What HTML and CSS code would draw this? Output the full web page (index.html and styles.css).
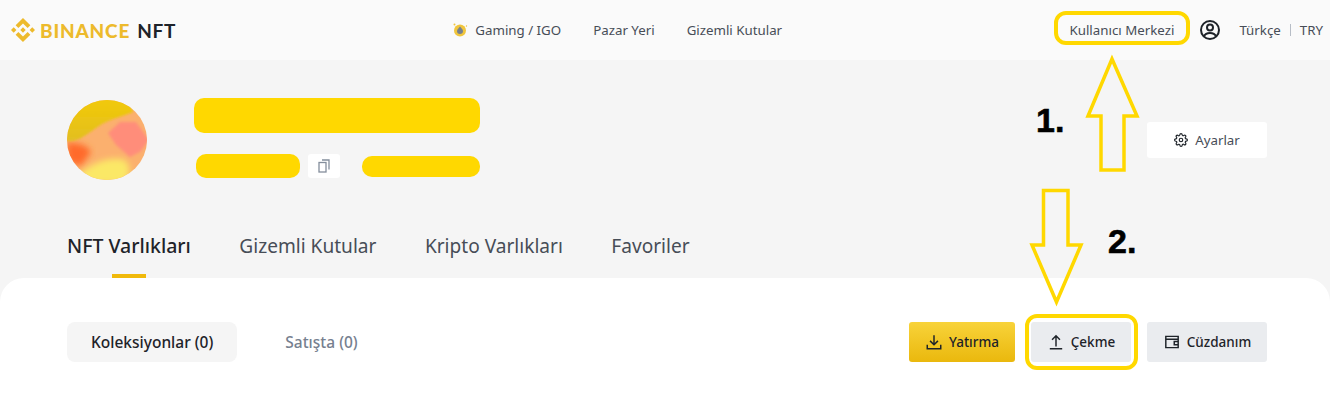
FILE: index.html
```html
<!DOCTYPE html>
<html>
<head>
  <title>Binance NFT</title>
  <link rel="stylesheet" href="styles.css">
</head>
<body>
  <div class="page">
    <header class="topbar">
      <a class="logo">
        <svg class="logo-mark" viewBox="0 0 24 24"><path d="M16.624 13.9202l2.7175 2.7154-7.353 7.353-7.353-7.352 2.7175-2.7164 4.6355 4.6595 4.6356-4.6595zm4.6366-4.6366L24 12l-2.7154 2.7164L18.5682 12l2.6924-2.7164zm-9.272.001l2.7163 2.6914-2.7164 2.7174v-.001L9.2721 12l2.7164-2.7154zm-9.2722-.001L5.4088 12l-2.6914 2.6924L0 12l2.7164-2.7164zM11.9885.0115l7.353 7.329-2.7174 2.7154-4.6356-4.6356-4.6355 4.6595-2.7174-2.7154 7.353-7.353z"/></svg>
        <span class="logo-gold">BINANCE</span>
        <span class="logo-dark">NFT</span>
      </a>
      <nav class="nav">
        <a class="nav-item">
          <svg class="igo-icon" viewBox="0 0 16 16">
            <circle cx="8" cy="8.500" r="6" fill="#f0c53c"/>
            <path d="M8 4.500c1 1.600 3 2.600 3 4.600a3 3 0 0 1-6 0c0-2 2-3 3-4.600z" fill="#76808f"/>
            <circle cx="2.500" cy="2.500" r="1" fill="#f0c53c"/>
            <circle cx="14.500" cy="4" r=".7" fill="#f0c53c"/>
          </svg>
          Gaming / IGO
        </a>
        <a class="nav-item">Pazar Yeri</a>
        <a class="nav-item">Gizemli Kutular</a>
      </nav>
      <div class="top-right">
        <a class="nav-item">Kullanıcı Merkezi</a>
        <svg class="user-icon" viewBox="0 0 24 24" fill="none" stroke="#1e2329" stroke-width="2">
          <circle cx="12" cy="12" r="9"/>
          <circle cx="12" cy="9.500" r="3"/>
          <path d="M6 18.500c1-2.500 3-3.500 6-3.500s5 1 6 3.500"/>
        </svg>
        <div class="lang">
          <span>Türkçe</span>
          <i class="lang-sep"></i>
          <span>TRY</span>
        </div>
      </div>
    </header>

    <section class="hero">
      <div class="profile">
        <svg class="avatar" viewBox="0 0 80 80">
          <defs>
            <filter id="soft" x="-20%" y="-20%" width="140%" height="140%"><feGaussianBlur stdDeviation="3"/></filter>
            <filter id="crisp" x="-20%" y="-20%" width="140%" height="140%"><feGaussianBlur stdDeviation="1.500"/></filter>
            <filter id="softer" x="-20%" y="-20%" width="140%" height="140%"><feGaussianBlur stdDeviation="1"/></filter>
            <linearGradient id="cap" x1="0" y1="0" x2="0" y2="1">
              <stop offset="0" stop-color="#f3ca04"/>
              <stop offset="1" stop-color="#e2bf22"/>
            </linearGradient>
          </defs>
          <rect width="80" height="80" fill="#fbb06e"/>
          <path d="M0 42C8 44 18 42 24 52L14 66 0 62z" fill="#ff6a2a" filter="url(#soft)"/>
          <path d="M12 74C26 62 44 56 58 60 64 66 64 74 58 84H12z" fill="#fbe866" filter="url(#soft)"/>
          <path d="M41 33L53 22H69L82 40 73 52 63 57 49 45z" fill="#ff8d7a" filter="url(#crisp)"/>
          <path d="M-2 40C3 42 8 42 19 35 28 29 34 24 39 22 48 18 56 16 66 12L60-4H-2z" fill="url(#cap)" filter="url(#softer)"/>
        </svg>
        <div class="profile-info">
          <div class="mask mask-name"></div>
          <div class="profile-sub">
            <div class="mask mask-id"></div>
            <div class="copy-btn">
              <svg viewBox="0 0 12 14" fill="none" stroke="#848e9c" stroke-width="1.300">
                <rect x="1" y="3.500" width="7" height="9.500"/>
                <path d="M4 1h7v9.500"/>
              </svg>
            </div>
            <div class="mask mask-date"></div>
          </div>
        </div>
        <a class="settings-btn">
          <svg viewBox="0 0 24 24" fill="none" stroke="#1e2329" stroke-width="2">
            <circle cx="12" cy="12" r="3"/>
            <path d="M19.400 15a1.650 1.650 0 0 0 .33 1.820l.06.06a2 2 0 0 1 0 2.830 2 2 0 0 1-2.830 0l-.06-.06a1.650 1.650 0 0 0-1.820-.33 1.650 1.650 0 0 0-1 1.510V21a2 2 0 0 1-2 2 2 2 0 0 1-2-2v-.09A1.650 1.650 0 0 0 9 19.400a1.650 1.650 0 0 0-1.820.33l-.06.06a2 2 0 0 1-2.830 0 2 2 0 0 1 0-2.830l.06-.06a1.650 1.650 0 0 0 .33-1.820 1.650 1.650 0 0 0-1.510-1H3a2 2 0 0 1-2-2 2 2 0 0 1 2-2h.09A1.650 1.650 0 0 0 4.600 9a1.650 1.650 0 0 0-.33-1.820l-.06-.06a2 2 0 0 1 0-2.830 2 2 0 0 1 2.830 0l.06.06a1.650 1.650 0 0 0 1.820.33H9a1.650 1.650 0 0 0 1-1.510V3a2 2 0 0 1 2-2 2 2 0 0 1 2 2v.09a1.650 1.650 0 0 0 1 1.510 1.650 1.650 0 0 0 1.820-.33l.06-.06a2 2 0 0 1 2.830 0 2 2 0 0 1 0 2.830l-.06.06a1.650 1.650 0 0 0-.33 1.820V9a1.650 1.650 0 0 0 1.510 1H21a2 2 0 0 1 2 2 2 2 0 0 1-2 2h-.09a1.650 1.650 0 0 0-1.510 1z"/>
          </svg>
          Ayarlar
        </a>
      </div>
      <div class="tabs">
        <a class="tab active">NFT Varlıkları</a>
        <a class="tab">Gizemli Kutular</a>
        <a class="tab">Kripto Varlıkları</a>
        <a class="tab">Favoriler</a>
      </div>
    </section>

    <section class="panel">
      <div class="filters">
        <a class="filter active">Koleksiyonlar (0)</a>
        <a class="filter">Satışta (0)</a>
      </div>
      <div class="actions">
        <a class="btn btn-gold">
          <svg viewBox="0 0 16 16" fill="none" stroke="#1e2329" stroke-width="1.300"><path d="M8 2v8M4.500 7L8 10.500 11.500 7M2 10.500V14h12v-3.500"/></svg>
          Yatırma
        </a>
        <a class="btn btn-grey btn-cekme">
          <svg viewBox="0 0 16 16" fill="none" stroke="#1e2329" stroke-width="1.300"><path d="M8 12V2.500M4.500 6L8 2.500 11.500 6M2.500 14h11"/></svg>
          Çekme
        </a>
        <a class="btn btn-grey btn-wallet">
          <svg viewBox="0 0 16 16" fill="none" stroke="#1e2329" stroke-width="1.300"><path d="M2.500 3h11v10h-11zM2.500 5.500h11M13.500 7.500h-3.500v3h3.500"/></svg>
          Cüzdanım
        </a>
      </div>
    </section>

    <div class="mark-box mark-top"></div>
    <div class="mark-box mark-cekme"></div>
    <svg class="arrows" viewBox="0 0 1330 412" fill="none" stroke="#ffd800" stroke-width="3.500">
      <path d="M1112 59L1137 116H1124V170H1101V116H1088z"/>
      <path d="M1043.500 190.500H1068V245H1081L1056.500 302 1032 245H1043.500z"/>
    </svg>
    <span class="step step-1">1.</span>
    <span class="step step-2">2.</span>
  </div>
</body>
</html>
```

FILE: styles.css
```css
* {
  box-sizing: border-box;
}
body {
  margin: 0;
  font-family: "Noto Sans", Arial, sans-serif;
  color: #1e2329;
  background: #f5f5f5;
}
svg {
  display: block;
  flex: none;
}
.page {
  position: relative;
  width: 1330px;
  height: 412px;
  overflow: hidden;
  display: flex;
  flex-direction: column;
}

/* top bar */
.topbar {
  height: 60px;
  flex: none;
  background: #fafafa;
  display: flex;
  align-items: center;
  padding: 0 7px 0 11px;
}
.logo {
  display: flex;
  align-items: center;
  font-family: "Lato", Arial, sans-serif;
  font-weight: 900;
  font-size: 19px;
  letter-spacing: 0.8px;
}
.logo-mark {
  width: 24px;
  height: 24px;
  fill: #edba2c;
  margin-right: 5px;
}
.logo-gold {
  color: #edba2c;
  margin-right: 7px;
}
.logo-dark {
  font-weight: 700;
}
.nav {
  display: flex;
  align-items: center;
  gap: 32px;
  margin-left: 276px;
}
.nav-item {
  display: flex;
  align-items: center;
  font-size: 13.3px;
  color: #474d57;
}
.igo-icon {
  width: 16px;
  height: 16px;
  margin-right: 7px;
}
.top-right {
  display: flex;
  align-items: center;
  margin-left: auto;
}
.user-icon {
  width: 24px;
  height: 24px;
  margin: 0 17px 0 24px;
}
.lang {
  display: flex;
  align-items: center;
  font-size: 13.3px;
  color: #474d57;
}
.lang-sep {
  width: 1px;
  height: 12px;
  background: #b7bdc6;
  margin: 0 9px;
}

/* profile area */
.hero {
  height: 218px;
  flex: none;
  padding: 38px 63px 0 67px;
  display: flex;
  flex-direction: column;
  justify-content: space-between;
}
.profile {
  display: flex;
  align-items: flex-start;
}
.avatar {
  width: 80px;
  height: 80px;
  margin-top: 2px;
  border-radius: 50%;
}
.profile-info {
  margin-left: 47px;
}
.mask {
  background: #ffd800;
}
.mask-name {
  width: 286px;
  height: 35px;
  border-radius: 10px;
}
.profile-sub {
  display: flex;
  align-items: center;
  margin-top: 21px;
  padding-left: 2px;
}
.mask-id {
  width: 104px;
  height: 24px;
  border-radius: 10px;
}
.mask-date {
  width: 118px;
  height: 21px;
  margin-left: 22px;
  border-radius: 10px;
}
.copy-btn {
  width: 32px;
  height: 24px;
  margin-left: 8px;
  background: #fff;
  border-radius: 3px;
  display: flex;
  align-items: center;
  justify-content: center;
}
.copy-btn svg {
  width: 12px;
  height: 14px;
}
.settings-btn {
  margin: 24px 0 0 auto;
  width: 120px;
  height: 36px;
  background: #fff;
  border-radius: 3px;
  display: flex;
  align-items: center;
  justify-content: center;
  gap: 7px;
  font-size: 13.3px;
  color: #474d57;
}
.settings-btn svg {
  width: 14px;
  height: 14px;
}
.tabs {
  display: flex;
  gap: 48.5px;
}
.tab {
  position: relative;
  font-size: 19.1px;
  line-height: 28px;
  padding-bottom: 18px;
  color: #474d57;
}
.tab.active {
  color: #1e2329;
  font-size: 19.5px;
  font-weight: 500;
}
.tab.active::after {
  content: "";
  position: absolute;
  left: 50%;
  bottom: 0;
  width: 34px;
  height: 4px;
  margin-left: -17px;
  background: #f0b90b;
}

/* white panel */
.panel {
  flex: 1;
  background: #fff;
  border-radius: 24px 24px 0 0;
  padding: 44px 63px 0 67px;
  display: flex;
  justify-content: space-between;
  align-items: flex-start;
}
.filters {
  display: flex;
}
.filter {
  height: 40px;
  padding: 0 24px;
  border-radius: 8px;
  display: flex;
  align-items: center;
  font-size: 15.5px;
  font-weight: 500;
  color: #76808f;
}
.filter + .filter {
  margin-left: 24px;
}
.filter.active {
  background: #f5f5f5;
  color: #1e2329;
}
.actions {
  display: flex;
  gap: 16px;
}
.btn {
  height: 40px;
  width: 106px;
  border-radius: 3px;
  display: flex;
  align-items: center;
  justify-content: center;
  gap: 6px;
  font-size: 13.5px;
  font-weight: 500;
  color: #1e2329;
}
.btn svg {
  width: 18px;
  height: 18px;
}
.btn-gold {
  background: linear-gradient(180deg, #f8d33a, #eab80d);
}
.btn-grey {
  background: #eaecef;
}
.btn-cekme {
  width: 100px;
}
.btn-wallet {
  width: 120px;
}

/* annotations drawn over the screenshot */
.mark-box {
  position: absolute;
  border: 4px solid #ffd800;
}
.mark-top {
  left: 1054px;
  top: 11px;
  width: 136px;
  height: 34px;
  border-radius: 12px;
}
.mark-cekme {
  left: 1025px;
  top: 314px;
  width: 113px;
  height: 56px;
  border-radius: 12px;
}
.arrows {
  position: absolute;
  left: 0;
  top: 0;
  width: 1330px;
  height: 412px;
  pointer-events: none;
}
.step {
  position: absolute;
  font-family: "Liberation Sans", Arial, sans-serif;
  font-weight: 700;
  font-size: 34px;
  line-height: 34px;
  color: #000;
  -webkit-text-stroke: 0.6px #000;
}
.step-1 {
  left: 1036px;
  top: 103px;
}
.step-2 {
  left: 1108px;
  top: 224px;
}
```
